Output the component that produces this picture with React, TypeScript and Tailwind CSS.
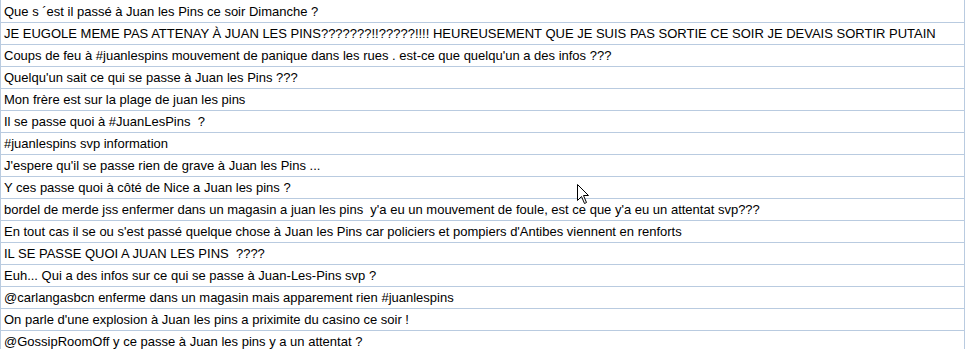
import React from "react";

const rows = [
  "Que s ´est il passé à Juan les Pins ce soir Dimanche ?",
  "JE EUGOLE MEME PAS ATTENAY À JUAN LES PINS???????!!?????!!!! HEUREUSEMENT QUE JE SUIS PAS SORTIE CE SOIR JE DEVAIS SORTIR PUTAIN",
  "Coups de feu à #juanlespins mouvement de panique dans les rues . est-ce que quelqu'un a des infos ???",
  "Quelqu'un sait ce qui se passe à Juan les Pins ???",
  "Mon frère est sur la plage de juan les pins",
  "Il se passe quoi à #JuanLesPins  ?",
  "#juanlespins svp information",
  "J'espere qu'il se passe rien de grave à Juan les Pins ...",
  "Y ces passe quoi à côté de Nice a Juan les pins ?",
  "bordel de merde jss enfermer dans un magasin a juan les pins  y'a eu un mouvement de foule, est ce que y'a eu un attentat svp???",
  "En tout cas il se ou s'est passé quelque chose à Juan les Pins car policiers et pompiers d'Antibes viennent en renforts",
  "IL SE PASSE QUOI A JUAN LES PINS  ????",
  "Euh... Qui a des infos sur ce qui se passe à Juan-Les-Pins svp ?",
  "@carlangasbcn enferme dans un magasin mais apparement rien #juanlespins",
  "On parle d'une explosion à Juan les pins a priximite du casino ce soir !",
  "@GossipRoomOff y ce passe à Juan les pins y a un attentat ?",
];

export default function App() {
  return (
    <div className="relative w-[966px] h-[349px] overflow-hidden bg-white">
      <div className="w-[965px] pt-[1px] border-l border-r border-[#b9cbe0]">
        {rows.map((t, i) => (
          <div
            key={i}
            className="h-[22px] border-b border-[#b9cbe0] pl-[3px] flex items-center whitespace-pre text-[13px] leading-none text-black font-['Liberation_Sans',Arial,sans-serif]"
          >
            {t}
          </div>
        ))}
      </div>
      <svg
        className="absolute left-[577px] top-[184px]"
        width="13"
        height="21"
        viewBox="0 0 13 21"
      >
        <path
          d="M0.5 0.5 L0.5 16.5 L4.5 12.5 L7.5 19.5 L9.5 18.5 L6.5 11.5 L11.5 11.5 Z"
          fill="white"
          stroke="black"
          strokeWidth="1"
          strokeLinejoin="miter"
        />
      </svg>
    </div>
  );
}
